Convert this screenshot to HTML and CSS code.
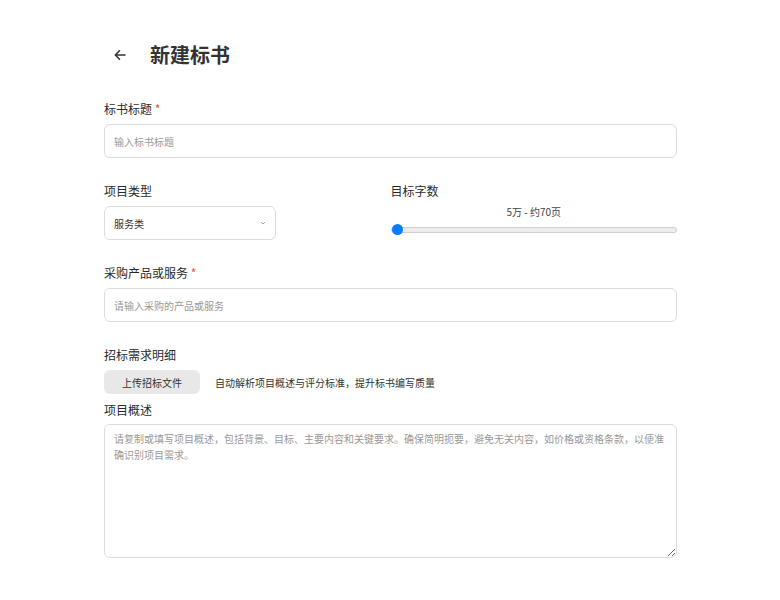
FILE: index.html
```html
<!DOCTYPE html>
<html lang="zh-CN">
<head>
<meta charset="utf-8">
<title>新建标书</title>
<link rel="stylesheet" href="styles.css">
</head>
<body>
<div class="page">
  <header class="header">
    <button class="back" aria-label="返回">
      <svg width="16" height="16" viewBox="0 0 16 16" fill="none" stroke="#333" stroke-width="1.6" stroke-linecap="round" stroke-linejoin="round"><path d="M13 8H3.5M7.5 3.8L3.3 8l4.2 4.2"/></svg>
    </button>
    <h1 class="title">新建标书</h1>
  </header>

  <div class="group">
    <label class="label">标书标题 <span class="req">*</span></label>
    <input class="input" type="text" placeholder="输入标书标题">
  </div>

  <div class="group row">
    <div class="col">
      <label class="label">项目类型</label>
      <div class="select">
        <span>服务类</span>
        <svg class="chev" width="8" height="8" viewBox="0 0 8 8" fill="none" stroke="#999" stroke-width="0.9"><path d="M2 3l2 2 2-2"/></svg>
      </div>
    </div>
    <div class="col">
      <label class="label">目标字数</label>
      <div class="range-val">5万 - 约70页</div>
      <input class="range" type="range" min="0" max="100" value="0">
    </div>
  </div>

  <div class="group">
    <label class="label">采购产品或服务 <span class="req">*</span></label>
    <input class="input" type="text" placeholder="请输入采购的产品或服务">
  </div>

  <div class="group last">
    <label class="label">招标需求明细</label>
    <div class="upload-row">
      <button class="upload">上传招标文件</button>
      <span class="hint">自动解析项目概述与评分标准，提升标书编写质量</span>
    </div>
    <label class="label sub">项目概述</label>
    <textarea class="textarea" placeholder="请复制或填写项目概述，包括背景、目标、主要内容和关键要求。确保简明扼要，避免无关内容，如价格或资格条款，以便准确识别项目需求。"></textarea>
  </div>
</div>
</body>
</html>
```

FILE: styles.css
```css
* { box-sizing: border-box; }
body {
  margin: 0;
  background: #fff;
  font-family: "Noto Sans CJK SC", "Noto Sans", sans-serif;
  color: #333;
}
.page {
  width: 573px;
  margin-left: 104px;
  padding-top: 35px;
}
.header {
  display: flex;
  align-items: center;
  height: 40px;
  margin-bottom: 25px;
}
.back {
  width: 46px;
  height: 40px;
  padding: 0 0 0 8px;
  border: 0;
  background: none;
  display: flex;
  align-items: center;
}
.title {
  margin: 0;
  font-size: 20px;
  font-weight: 700;
  color: #333;
  line-height: 40px;
}
.group { margin-bottom: 24px; }
.label {
  display: block;
  font-size: 12px;
  line-height: 18px;
  font-weight: 400;
  color: #2a2a2a;
  margin-bottom: 6px;
}
.req { color: #f05050; }
.input {
  display: block;
  width: 100%;
  height: 34px;
  border: 1px solid #dcdcdc;
  border-radius: 6px;
  padding: 0 9px;
  font-family: inherit;
  font-size: 10px;
  color: #333;
  outline: none;
}
.input::placeholder, .textarea::placeholder { color: #999; }
.row {
  display: grid;
  grid-template-columns: 1fr 1fr;
}
.select {
  width: 60%;
  height: 34px;
  border: 1px solid #dcdcdc;
  border-radius: 6px;
  padding: 0 8px 0 9px;
  display: flex;
  align-items: center;
  justify-content: space-between;
  font-size: 10px;
  color: #333;
}
.range-val {
  text-align: center;
  font-size: 10px;
  line-height: 14px;
  color: #444;
  margin-top: -1px;
}
.range {
  -webkit-appearance: none;
  appearance: none;
  display: block;
  width: 100%;
  height: 11px;
  margin: 5px 0 0;
  background: transparent;
}
.range::-webkit-slider-runnable-track {
  height: 6px;
  background: #ececec;
  border: 1px solid #cfcfcf;
  border-radius: 3px;
}
.range::-webkit-slider-thumb {
  -webkit-appearance: none;
  width: 11px;
  height: 11px;
  border-radius: 50%;
  background: #0a7cff;
  border: 0;
  margin-top: -3.5px;
}
.upload-row {
  display: flex;
  align-items: center;
  gap: 15px;
  margin-bottom: 7px;
}
.upload {
  height: 24px;
  width: 96px;
  border: 0;
  border-radius: 6px;
  background: #e8e8e8;
  font-family: inherit;
  font-size: 10px;
  color: #333;
}
.hint { font-size: 10px; color: #333; }
.label.sub { margin-bottom: 5px; }
.textarea {
  display: block;
  width: 100%;
  height: 134px;
  border: 1px solid #dcdcdc;
  border-radius: 6px;
  padding: 6px 9px;
  font-family: inherit;
  font-size: 10px;
  line-height: 16px;
  color: #333;
  outline: none;
  resize: vertical;
}
```
